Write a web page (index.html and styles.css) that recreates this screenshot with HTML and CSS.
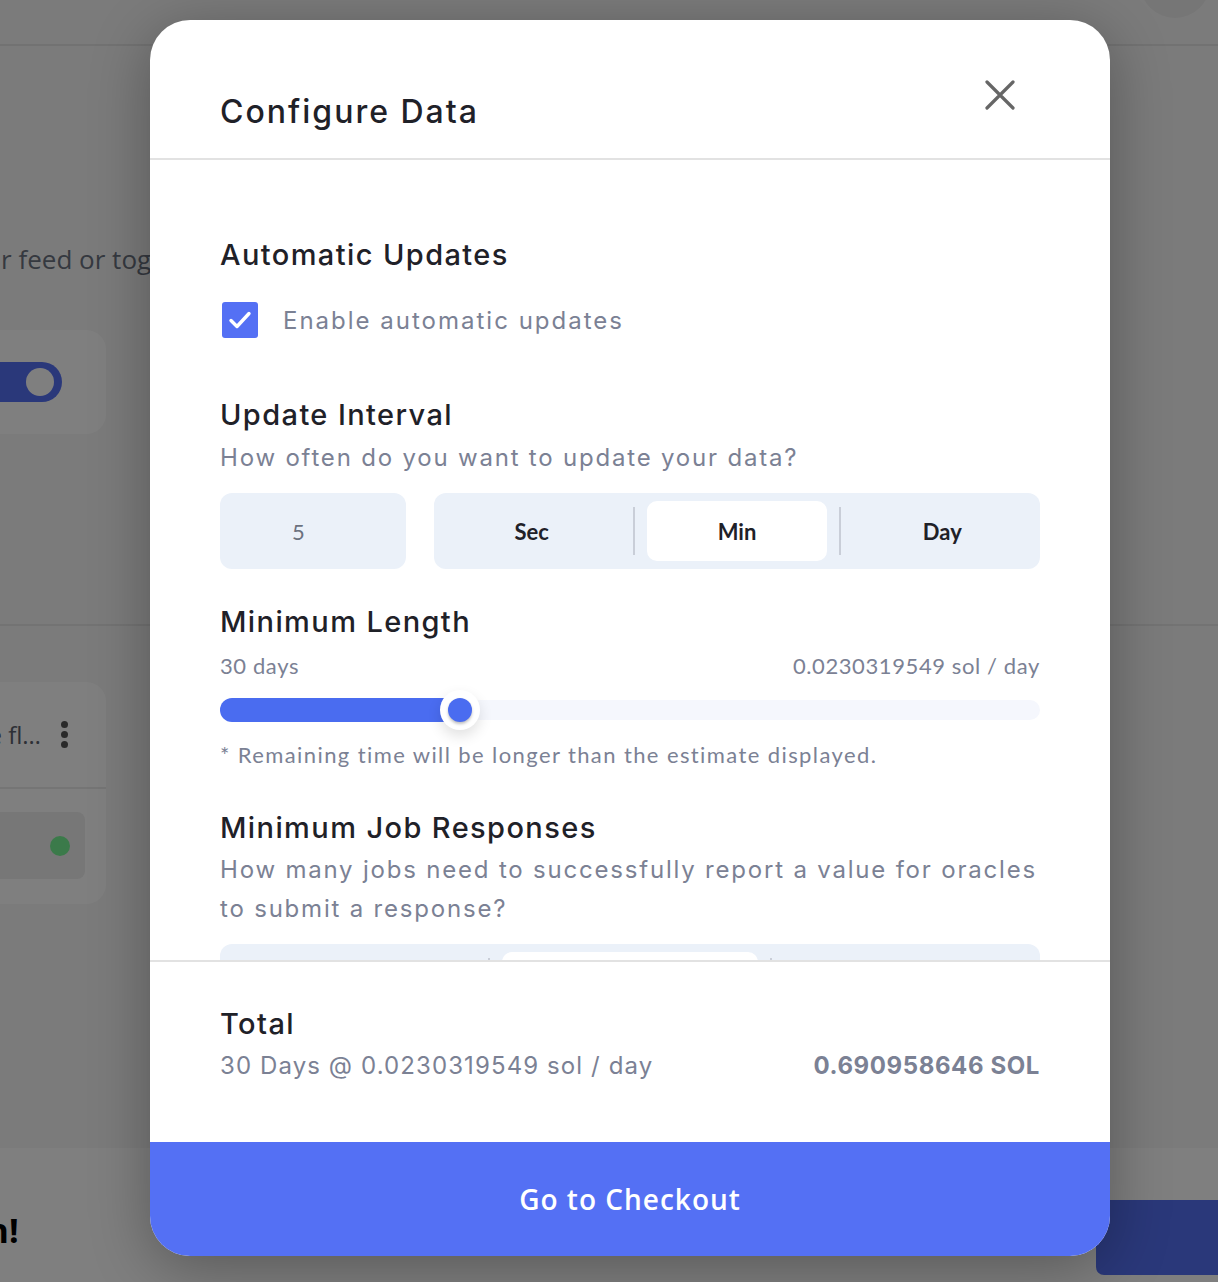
FILE: index.html
```html
<!DOCTYPE html>
<html lang="en">
<head>
<meta charset="utf-8">
<title>Configure Data</title>
<link rel="stylesheet" href="styles.css">
</head>
<body>
<div class="page">
  <header class="topbar"><div class="avatar"></div></header>
  <main class="main">
    <p class="intro">Select your feed or toggle between the available options to configure it.</p>
    <div class="card card-toggle">
      <div class="toggle"><div class="knob"></div></div>
    </div>
    <div class="rule"></div>
    <div class="card card-feed">
      <div class="feed-row">
        <span class="feed-name">SOL/USD price fl…</span>
        <span class="kebab"><i></i><i></i><i></i></span>
      </div>
      <div class="feed-body">
        <div class="feed-status"><span class="dot"></span></div>
      </div>
    </div>
    <div class="bottom-bar">
      <span class="promo">Launch your own feed in minutes, then!</span>
      <span class="promo-btn"></span>
    </div>
  </main>
  <div class="scrim"></div>

  <section class="modal">
    <div class="modal-head">
      <h1 class="modal-title">Configure Data</h1>
      <svg class="close" width="30" height="30" viewBox="0 0 30 30" aria-label="Close">
        <path d="M2 2 L28 28 M28 2 L2 28" stroke="#666" stroke-width="3.2" stroke-linecap="round" fill="none"/>
      </svg>
    </div>
    <div class="modal-body">
      <h2 class="h2 first">Automatic Updates</h2>
      <label class="check-row">
        <span class="checkbox">
          <svg width="36" height="36" viewBox="0 0 36 36"><path d="M9 18.5 L15 24.5 L27 11.5" stroke="#fff" stroke-width="3.4" fill="none" stroke-linecap="round" stroke-linejoin="round"/></svg>
        </span>
        <span class="check-label">Enable automatic updates</span>
      </label>

      <h2 class="h2 gap-lg">Update Interval</h2>
      <p class="sub">How often do you want to update your data?</p>
      <div class="interval-row">
        <div class="num-box">5</div>
        <div class="seg">
          <span class="seg-item">Sec</span>
          <span class="seg-div"></span>
          <span class="seg-item active">Min</span>
          <span class="seg-div"></span>
          <span class="seg-item">Day</span>
        </div>
      </div>

      <h2 class="h2 gap-md">Minimum Length</h2>
      <div class="len-row">
        <span>30 days</span>
        <span>0.0230319549 sol / day</span>
      </div>
      <div class="slider">
        <div class="track"></div>
        <div class="fill"></div>
        <div class="thumb"><span></span></div>
      </div>
      <p class="note">* Remaining time will be longer than the estimate displayed.</p>

      <h2 class="h2 gap-jobs">Minimum Job Responses</h2>
      <p class="sub two-line">How many jobs need to successfully report a value for oracles to submit a response?</p>
      <div class="seg seg-jobs">
        <span class="seg-item">1</span>
        <span class="seg-div"></span>
        <span class="seg-item active">2</span>
        <span class="seg-div"></span>
        <span class="seg-item">3</span>
      </div>
    </div>
    <div class="modal-foot">
      <h2 class="h2 total">Total</h2>
      <div class="total-row">
        <span>30 Days @ 0.0230319549 sol / day</span>
        <strong class="total-val">0.690958646 SOL</strong>
      </div>
    </div>
    <button class="checkout">Go to Checkout</button>
  </section>
</div>
</body>
</html>
```
FILE: styles.css
```css
* { box-sizing: border-box; }
html, body { margin: 0; padding: 0; }
body {
  width: 1218px;
  height: 1282px;
  overflow: hidden;
  font-family: "Open Sans", "Liberation Sans", sans-serif;
}
.page {
  position: relative;
  width: 1218px;
  height: 1282px;
  background: #f7f7f7;
  overflow: hidden;
}

/* ---------- background page ---------- */
.topbar {
  height: 46px;
  border-bottom: 2px solid #e4e4e4;
  display: flex;
  justify-content: flex-end;
}
.avatar {
  width: 70px;
  height: 70px;
  border-radius: 50%;
  background: #ececec;
  margin-top: -52px;
  margin-right: 8px;
}
.main { display: flex; flex-direction: column; }
.intro {
  margin: 195px 0 0 -122px;
  font-size: 26px;
  line-height: 36px;
  color: #6b7280;
  white-space: nowrap;
}
.card {
  background: #fff;
  border-radius: 20px;
  width: 306px;
  margin-left: -200px;
}
.card-toggle {
  margin-top: 53px;
  height: 104px;
  display: flex;
  align-items: center;
  justify-content: flex-end;
  padding-right: 44px;
}
.toggle {
  width: 80px;
  height: 40px;
  border-radius: 20px;
  background: #5470f4;
  display: flex;
  align-items: center;
  justify-content: flex-end;
  padding-right: 8px;
}
.knob { width: 28px; height: 28px; border-radius: 50%; background: #fff; }
.rule { margin-top: 190px; height: 2px; background: #e6e6e6; }
.card-feed {
  margin-top: 56px;
  height: 222px;
}
.feed-row {
  height: 107px;
  border-bottom: 2px solid #eaeaea;
  display: flex;
  align-items: center;
  justify-content: flex-end;
  padding-right: 38px;
  gap: 20px;
}
.feed-name { font-size: 24px; color: #5a606c; white-space: nowrap; }
.kebab { display: flex; flex-direction: column; gap: 3px; }
.kebab i { width: 7px; height: 7px; border-radius: 50%; background: #555; display: block; }
.feed-body { padding: 23px 21px 0 0; }
.feed-status {
  height: 67px;
  border-radius: 8px;
  background: #eeeeee;
  display: flex;
  align-items: center;
  justify-content: flex-end;
  padding-right: 15px;
}
.dot { width: 20px; height: 20px; border-radius: 50%; background: #76f494; }
.bottom-bar {
  margin-top: 244px;
  height: 140px;
  background: #fff;
  display: flex;
  align-items: flex-start;
  justify-content: space-between;
  padding-top: 50px;
}
.promo {
  font-size: 34px;
  font-weight: 700;
  color: #000;
  white-space: nowrap;
  margin-left: -656px;
  line-height: 64px;
}
.promo-btn {
  width: 140px;
  height: 75px;
  border-radius: 8px;
  background: #5470f4;
  margin-right: -18px;
  margin-top: 2px;
}
.scrim {
  position: absolute;
  inset: 0;
  background: rgba(0, 0, 0, 0.5);
}

/* ---------- modal ---------- */
.modal {
  position: absolute;
  left: 150px;
  top: 20px;
  width: 960px;
  height: 1236px;
  background: #fff;
  border-radius: 40px;
  overflow: hidden;
  box-shadow: 0 12px 60px rgba(0, 0, 0, 0.3);
  display: flex;
  flex-direction: column;
  font-family: "Inter", "Liberation Sans", sans-serif;
}
.modal-head {
  height: 140px;
  border-bottom: 2px solid #e2e2e2;
  display: flex;
  justify-content: space-between;
  align-items: flex-start;
  padding: 0 95px 0 70px;
}
.modal-title {
  margin: 73px 0 0;
  font-size: 32px;
  line-height: 38px;
  font-weight: 500;
  color: #1f2128;
  letter-spacing: 2px;
}
.close { margin-top: 60px; }

.modal-body {
  height: 802px;
  overflow: hidden;
  padding: 77px 70px 0;
  border-bottom: 2px solid #e2e2e2;
}
.h2 {
  margin: 0;
  font-size: 29px;
  line-height: 36px;
  font-weight: 500;
  color: #1f2128;
  letter-spacing: 1.4px;
}
.gap-lg { margin-top: 59px; }
.gap-md { margin-top: 35px; }
.gap-jobs { margin-top: 40px; }

.check-row {
  margin-top: 29px;
  display: flex;
  align-items: center;
  gap: 25px;
  height: 36px;
  padding-left: 2px;
}
.checkbox {
  width: 36px;
  height: 36px;
  border-radius: 3px;
  background: #5470f4;
  display: block;
}
.checkbox svg { display: block; }
.check-label {
  font-size: 24px;
  color: #7b8194;
  letter-spacing: 2px;
  font-weight: 400;
}
.sub {
  margin: 8px 0 0;
  font-size: 24px;
  line-height: 34px;
  color: #7b8194;
  letter-spacing: 1.8px;
}
.interval-row {
  margin-top: 18px;
  display: flex;
  gap: 28px;
  height: 76px;
}
.num-box {
  width: 186px;
  border-radius: 12px;
  background: #ebf1f9;
  display: flex;
  align-items: center;
  padding-left: 72px;
  font-family: "Lato", "Liberation Sans", sans-serif;
  font-size: 22px;
  color: #6b7280;
}
.seg {
  flex: 1;
  display: flex;
  align-items: center;
  background: #ebf1f9;
  border-radius: 12px;
  padding: 8px;
}
.seg-item {
  flex: 1;
  height: 100%;
  display: flex;
  align-items: center;
  justify-content: center;
  font-family: "Lato", "Liberation Sans", sans-serif;
  font-weight: 700;
  font-size: 22px;
  color: #1f2128;
  border-radius: 10px;
}
.seg-item.active { background: #fff; }
.seg-div {
  width: 2px;
  height: 48px;
  background: #c9ced8;
  margin: 0 12px;
}
.len-row {
  margin-top: 11px;
  display: flex;
  justify-content: space-between;
  font-family: "Lato", "Liberation Sans", sans-serif;
  font-size: 22px;
  line-height: 30px;
  color: #7b8194;
  letter-spacing: 0.6px;
}
.slider {
  position: relative;
  margin-top: 9px;
  height: 40px;
}
.track {
  position: absolute;
  left: 0; right: 0; top: 10px;
  height: 20px;
  border-radius: 10px;
  background: #f5f7fd;
}
.fill {
  position: absolute;
  left: 0; top: 8px;
  width: 240px;
  height: 24px;
  border-radius: 12px 0 0 12px;
  background: #4a6cf0;
}
.thumb {
  position: absolute;
  left: 220px; top: 0;
  width: 40px; height: 40px;
  border-radius: 50%;
  background: #fff;
  box-shadow: 0 6px 14px rgba(0, 0, 0, 0.12);
  display: flex;
  align-items: center;
  justify-content: center;
}
.thumb span {
  width: 24px; height: 24px;
  border-radius: 50%;
  background: #4a6cf0;
  box-shadow: 0 2px 3px rgba(0,0,0,0.25);
}
.note {
  margin: 10px 0 0;
  font-family: "Lato", "Liberation Sans", sans-serif;
  font-size: 22px;
  line-height: 30px;
  color: #7b8194;
  letter-spacing: 1.4px;
}
.two-line { margin-top: 4px; line-height: 39px; }
.seg-jobs {
  margin-top: 16px;
  height: 76px;
  flex: none;
  padding: 8px 0;
}
.seg-jobs .seg-item { color: transparent; }

.modal-foot {
  height: 180px;
  padding: 44px 70px 0;
}
.total { line-height: 36px; }
.total-row {
  margin-top: 7px;
  display: flex;
  justify-content: space-between;
  font-size: 24px;
  line-height: 34px;
  color: #7b8194;
  letter-spacing: 1.1px;
}
.total-val { font-weight: 700; color: #7b8194; letter-spacing: 0.6px; }

.checkout {
  flex: 1;
  border: 0;
  margin: 0;
  background: #5470f4;
  color: #fff;
  font-family: "Open Sans", "Liberation Sans", sans-serif;
  font-weight: 600;
  font-size: 28px;
  letter-spacing: 1px;
  padding: 0;
}
```
